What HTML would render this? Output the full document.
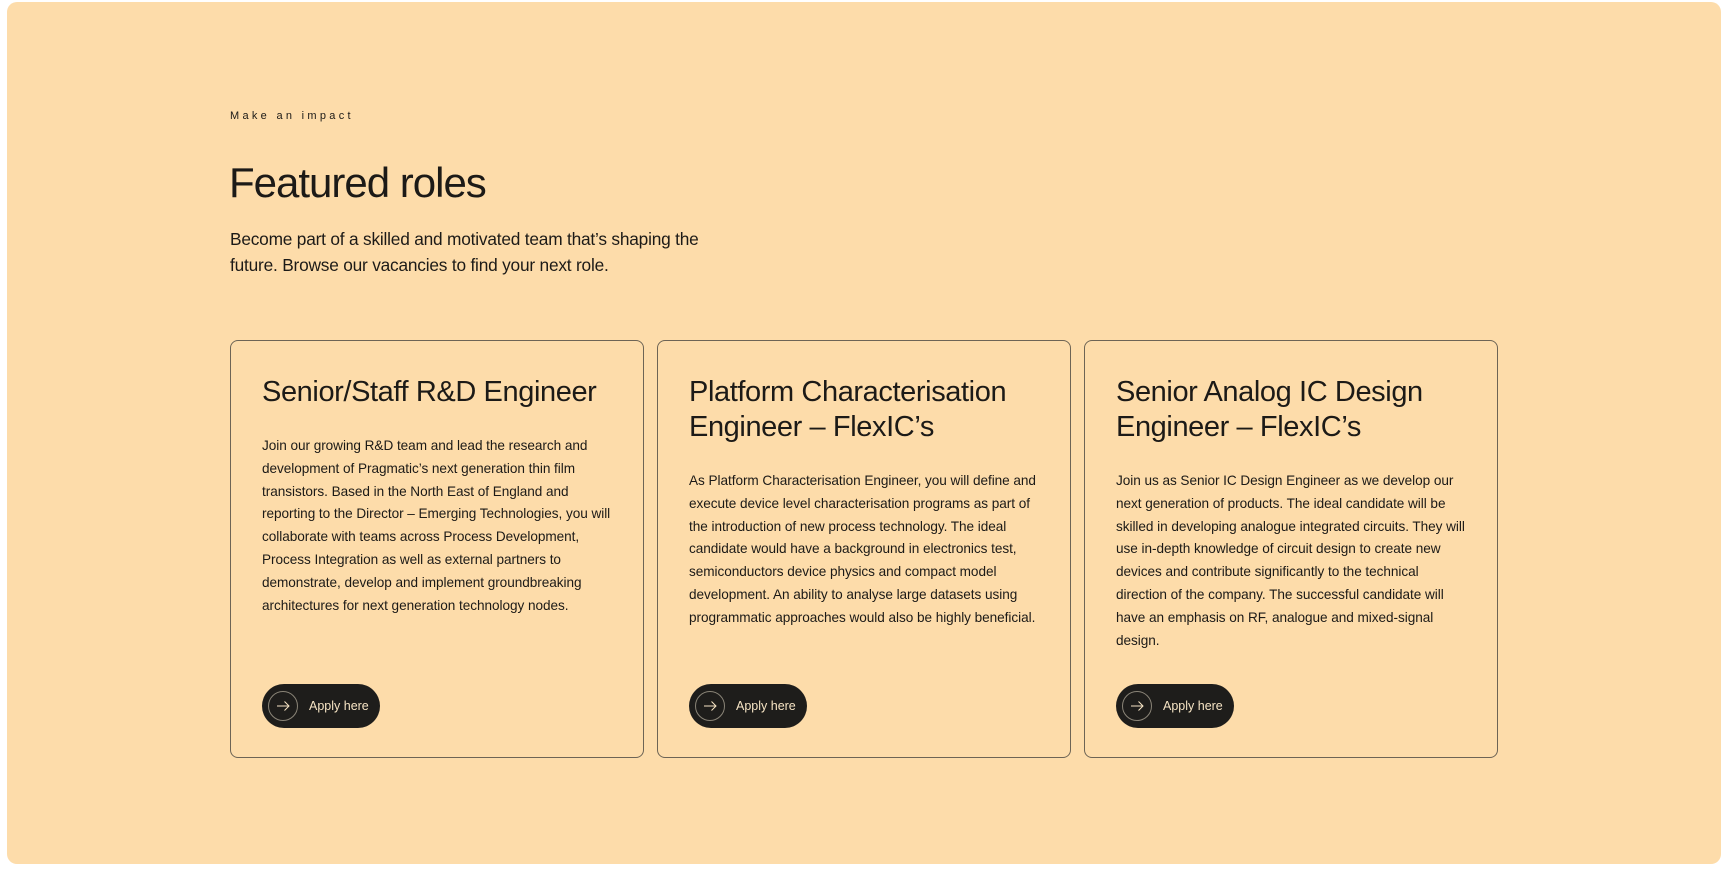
<!DOCTYPE html>
<html><head><meta charset="utf-8"><style>
*{margin:0;padding:0;box-sizing:border-box}
body{width:1728px;height:869px;background:#fff;font-family:"Liberation Sans",sans-serif;color:#1c1a17;position:relative;overflow:hidden}
.panel{position:absolute;left:7px;top:2px;width:1714px;height:862px;background:#fddcaa;border-radius:10px}
.eyebrow{position:absolute;left:230px;top:110px;font-size:11px;letter-spacing:3.3px}
h1{position:absolute;left:229px;top:159px;font-size:42px;font-weight:400;letter-spacing:-1px;white-space:nowrap}
.lead{position:absolute;left:230px;top:226px;font-size:17.3px;line-height:26px;letter-spacing:-0.2px;white-space:nowrap}
.card{position:absolute;top:340px;width:414px;height:418px;border:1px solid #6d6455;border-radius:8px}
.card h2{position:absolute;left:31px;top:34px;font-size:29px;line-height:35px;font-weight:400;letter-spacing:-0.4px;white-space:nowrap}
.card p{position:absolute;left:31px;font-size:13.6px;line-height:22.8px;letter-spacing:-0.05px;white-space:nowrap}
.btn{position:absolute;left:31px;top:343px;width:118px;height:44px;border-radius:22px;background:#1e1d1b;color:#f6e4c4;font-size:12.5px}
.btn svg{position:absolute;left:6px;top:7px}
.btn span{position:absolute;left:47px;top:15px}
</style></head><body>
<div class="panel"></div>
<div class="eyebrow">Make an impact</div>
<h1>Featured roles</h1>
<div class="lead">Become part of a skilled and motivated team that’s shaping the<br>future. Browse our vacancies to find your next role.</div>

<div class="card" style="left:230px">
<h2>Senior/Staff R&amp;D Engineer</h2>
<p style="top:94px">Join our growing R&amp;D team and lead the research and<br>development of Pragmatic’s next generation thin film<br>transistors. Based in the North East of England and<br>reporting to the Director – Emerging Technologies, you will<br>collaborate with teams across Process Development,<br>Process Integration as well as external partners to<br>demonstrate, develop and implement groundbreaking<br>architectures for next generation technology nodes.</p>
<div class="btn"><svg width="30" height="30" viewBox="0 0 30 30"><circle cx="15" cy="15" r="14.5" fill="none" stroke="#8a8477" stroke-width="1"/><path d="M9 15h12M16.5 10.5L21 15l-4.5 4.5" fill="none" stroke="#f6e4c4" stroke-width="1"/></svg><span>Apply here</span></div>
</div>

<div class="card" style="left:657px">
<h2>Platform Characterisation<br>Engineer – FlexIC’s</h2>
<p style="top:129px">As Platform Characterisation Engineer, you will define and<br>execute device level characterisation programs as part of<br>the introduction of new process technology. The ideal<br>candidate would have a background in electronics test,<br>semiconductors device physics and compact model<br>development. An ability to analyse large datasets using<br>programmatic approaches would also be highly beneficial.</p>
<div class="btn"><svg width="30" height="30" viewBox="0 0 30 30"><circle cx="15" cy="15" r="14.5" fill="none" stroke="#8a8477" stroke-width="1"/><path d="M9 15h12M16.5 10.5L21 15l-4.5 4.5" fill="none" stroke="#f6e4c4" stroke-width="1"/></svg><span>Apply here</span></div>
</div>

<div class="card" style="left:1084px">
<h2>Senior Analog IC Design<br>Engineer – FlexIC’s</h2>
<p style="top:129px">Join us as Senior IC Design Engineer as we develop our<br>next generation of products. The ideal candidate will be<br>skilled in developing analogue integrated circuits. They will<br>use in-depth knowledge of circuit design to create new<br>devices and contribute significantly to the technical<br>direction of the company. The successful candidate will<br>have an emphasis on RF, analogue and mixed-signal<br>design.</p>
<div class="btn"><svg width="30" height="30" viewBox="0 0 30 30"><circle cx="15" cy="15" r="14.5" fill="none" stroke="#8a8477" stroke-width="1"/><path d="M9 15h12M16.5 10.5L21 15l-4.5 4.5" fill="none" stroke="#f6e4c4" stroke-width="1"/></svg><span>Apply here</span></div>
</div>
</body></html>
